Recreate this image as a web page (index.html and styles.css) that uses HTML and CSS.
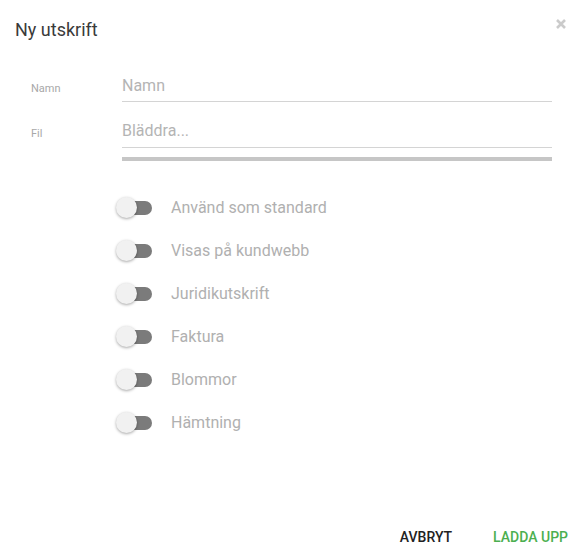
FILE: index.html
```html
<!DOCTYPE html>
<html>
<head>
<meta charset="utf-8">
<link rel="stylesheet" href="styles.css">
</head>
<body>
<div class="dialog">
  <div class="header">
    <h1 class="title">Ny utskrift</h1>
    <svg class="close" width="10" height="10" viewBox="0 0 10 10"><path d="M1 1 L9 9 M9 1 L1 9" stroke="#cbcbcb" stroke-width="2.6" stroke-linecap="butt"/></svg>
  </div>
  <div class="form">
    <div class="field">
      <label class="label">Namn</label>
      <div class="input"><span class="placeholder">Namn</span></div>
    </div>
    <div class="field">
      <label class="label">Fil</label>
      <div class="input"><span class="placeholder">Bläddra...</span></div>
    </div>
    <div class="progress-row"><div class="progress"></div></div>
  </div>
  <div class="toggles">
    <div class="toggle-row"><span class="switch"><span class="track"></span><span class="thumb"></span></span><span class="toggle-label">Använd som standard</span></div>
    <div class="toggle-row"><span class="switch"><span class="track"></span><span class="thumb"></span></span><span class="toggle-label">Visas på kundwebb</span></div>
    <div class="toggle-row"><span class="switch"><span class="track"></span><span class="thumb"></span></span><span class="toggle-label">Juridikutskrift</span></div>
    <div class="toggle-row"><span class="switch"><span class="track"></span><span class="thumb"></span></span><span class="toggle-label">Faktura</span></div>
    <div class="toggle-row"><span class="switch"><span class="track"></span><span class="thumb"></span></span><span class="toggle-label">Blommor</span></div>
    <div class="toggle-row"><span class="switch"><span class="track"></span><span class="thumb"></span></span><span class="toggle-label">Hämtning</span></div>
  </div>
  <div class="actions">
    <button class="btn cancel">AVBRYT</button>
    <button class="btn upload">LADDA UPP</button>
  </div>
</div>
</body>
</html>
```
FILE: styles.css
```css
* { box-sizing: border-box; }
html, body { margin: 0; padding: 0; background: #fff; }
body { font-family: Roboto, "Noto Sans", sans-serif; width: 584px; height: 555px; overflow: hidden; }
.dialog { width: 584px; height: 555px; display: flex; flex-direction: column; }
.header { display: flex; justify-content: space-between; align-items: flex-start; padding: 19px 18px 0 15px; height: 64px; }
.title { margin: 0; font-size: 18px; font-weight: 400; color: #3a3a3a; line-height: 22px; }
.close { display: block; margin-top: 0; }
.form { padding: 0 32px 0 31px; }
.field { display: flex; align-items: flex-start; height: 46px; }
.label { width: 91px; font-size: 11px; line-height: 13px; color: #a8a8a8; padding-top: 18px; }
.input { flex: 1; height: 38px; border-bottom: 1px solid #d4d4d4; padding-top: 12px; }
.field + .field .input { padding-top: 11px; }
.field + .field .label { padding-top: 17px; }
.placeholder { font-size: 16px; color: #b4b4b4; line-height: 20px; display: block; }
.progress-row { padding-left: 91px; }
.progress { height: 4px; background: #c6c6c6; margin-top: 1px; }
.toggles { padding: 25px 0 0 116px; }
.toggle-row { display: flex; align-items: center; height: 43px; }
.switch { position: relative; width: 36px; height: 22px; margin-right: 19px; flex: none; }
.track { position: absolute; left: 8px; top: 4px; width: 28px; height: 14px; border-radius: 7px; background: #7b7b7b; }
.thumb { position: absolute; left: 0; top: 0; width: 21px; height: 21px; border-radius: 50%; background: #f1f1f1; box-shadow: 0 1px 3px rgba(0,0,0,0.35); }
.toggle-label { font-size: 16px; color: #b0b0b0; }
.actions { margin-top: auto; display: flex; justify-content: flex-end; gap: 41px; padding: 0 16px 8px 0; }
.btn { border: none; background: none; padding: 0; font-family: Roboto, "Noto Sans", sans-serif; font-size: 14px; font-weight: 500; line-height: 20px; }
.cancel { color: #222; }
.upload { color: #4caf50; }
```
